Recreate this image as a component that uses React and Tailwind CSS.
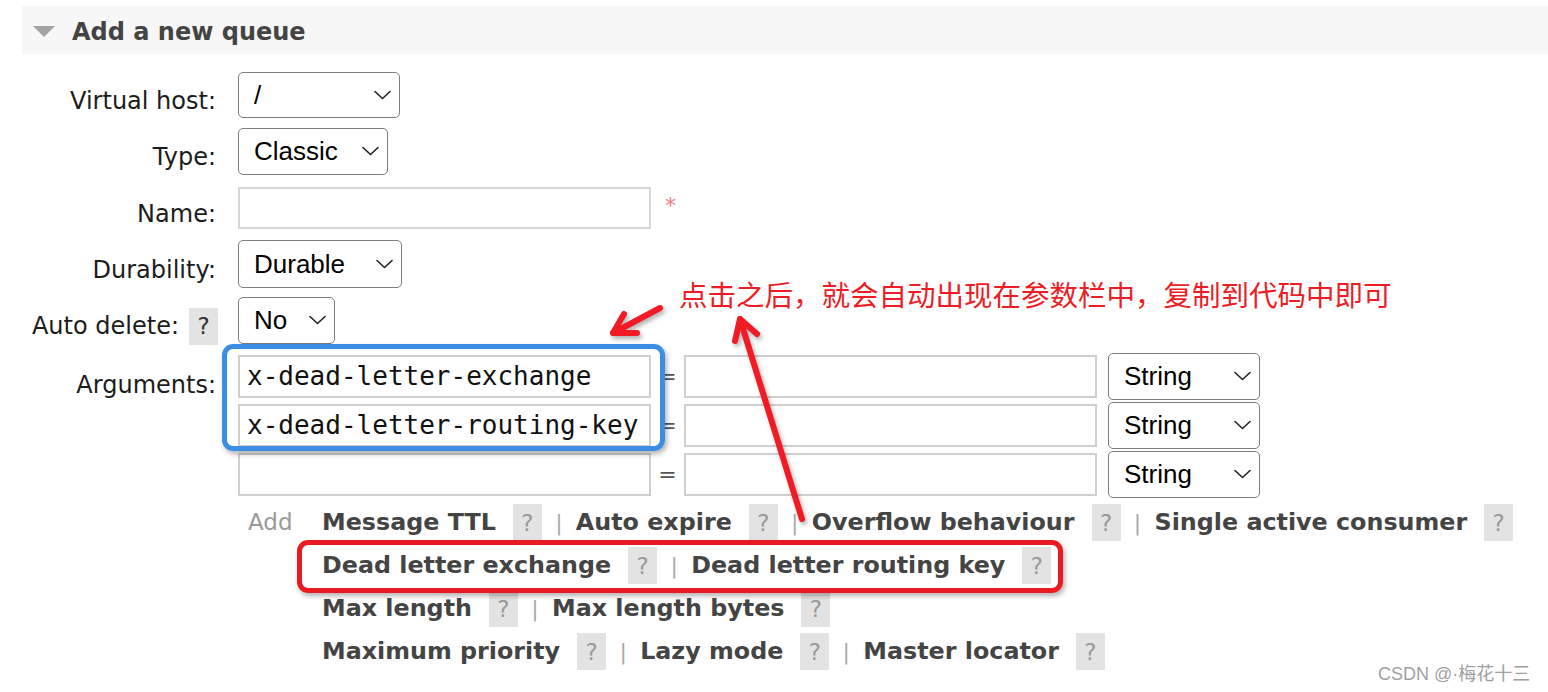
import React from 'react';

const sans = { fontFamily: '"DejaVu Sans", Verdana, sans-serif' };
const arial = { fontFamily: '"Liberation Sans", Arial, sans-serif' };
const mono = { fontFamily: '"DejaVu Sans Mono", Menlo, monospace' };
const cjk = { fontFamily: '"Noto Sans CJK SC", sans-serif' };

function Chevron() {
  return (
    <svg width="17" height="10" viewBox="0 0 17 10" fill="none">
      <path d="M1 1.5l7.5 7 7.5-7" stroke="#222" strokeWidth="1.6" strokeLinecap="round" strokeLinejoin="round" />
    </svg>
  );
}

function Select({ value, width, height = 'h-[47px]' }) {
  return (
    <div
      className={`${width} ${height} flex items-center justify-between pl-[15px] pr-[8px] border-[1.5px] border-[#7d7d7d] rounded-[5px] bg-white text-[26px] text-black`}
      style={arial}
    >
      <span>{value}</span>
      <Chevron />
    </div>
  );
}

function Input({ value = '' }) {
  return (
    <div
      className="w-[413px] h-[43px] flex items-center pl-[7px] border-2 border-[#cfcfcf] bg-white text-[26px] text-[#111]"
      style={mono}
    >
      {value}
    </div>
  );
}

function Help({ dark }) {
  return (
    <span
      className={`inline-flex items-center justify-center w-[29px] h-[37px] bg-[#e3e3e3] text-[23px] ${dark ? 'text-[#333]' : 'text-[#9a9a9a]'}`}
      style={sans}
    >
      ?
    </span>
  );
}

function LinkRow({ items }) {
  return (
    <div className="flex items-center h-[43px]">
      {items.map((label, i) => (
        <React.Fragment key={label}>
          {i > 0 && <span className="w-[34px] text-center text-[22px] text-[#aaa]">|</span>}
          <span className="font-bold text-[23.8px] text-[#444] mr-[17px]">{label}</span>
          <Help />
        </React.Fragment>
      ))}
    </div>
  );
}

function Row({ label, children, help }) {
  return (
    <div className="flex items-center h-[56.3px]">
      <div className="w-[218px] flex justify-end items-center gap-[10px] pt-[12px] text-[24px] text-[#1c1c1c]">
        <span className={help ? '' : 'pr-[2px]'}>{label}</span>
        {help && <Help dark />}
      </div>
      <div className="ml-[20px] flex items-center">{children}</div>
    </div>
  );
}

export default function App() {
  return (
    <div className="relative w-[1548px] h-[692px] bg-white overflow-hidden" style={sans}>
      <div className="mt-[6px] ml-[22px] h-[48px] bg-[#f7f7f7] flex items-center pt-[3px]">
        <svg width="22" height="12" viewBox="0 0 22 12" className="ml-[11px]">
          <path d="M0 0h22L11 11z" fill="#a3a3a3" />
        </svg>
        <span className="ml-[17px] font-bold text-[24px] text-[#444]">Add a new queue</span>
      </div>

      <div className="mt-[13px]">
        <Row label="Virtual host:">
          <Select value="/" width="w-[162px]" height="h-[46px]" />
        </Row>
        <Row label="Type:">
          <Select value="Classic" width="w-[150px]" />
        </Row>
        <Row label="Name:">
          <div className="w-[413px] h-[42px] border-2 border-[#d6d6d6] bg-white" />
          <span className="ml-[14px] -mt-[4px] text-[22px] text-[#ee8080]">*</span>
        </Row>
        <Row label="Durability:">
          <Select value="Durable" width="w-[164px]" height="h-[48px]" />
        </Row>
        <Row label="Auto delete:" help>
          <Select value="No" width="w-[97px]" />
        </Row>

        <div className="flex mt-[4px]">
          <div className="w-[218px] text-right pt-[15px] pr-[2px] text-[24px] text-[#1c1c1c]">Arguments:</div>
          <div className="ml-[20px] flex flex-col gap-[1px]">
            {['x-dead-letter-exchange', 'x-dead-letter-routing-key', ''].map((k) => (
              <div key={k || 'empty'} className="flex items-center h-[48px]">
                <Input value={k} />
                <span className="w-[33px] text-center text-[22px] text-[#555]">=</span>
                <Input />
                <div className="ml-[11px]">
                  <Select value="String" width="w-[152px]" />
                </div>
              </div>
            ))}
          </div>
        </div>

        <div className="flex mt-[3px]">
          <div className="w-[248px]" />
          <div className="w-[74px] pt-[3px] text-[23px] text-[#9a9a9a] leading-[36px]">Add</div>
          <div className="flex flex-col">
            <LinkRow items={['Message TTL', 'Auto expire', 'Overflow behaviour', 'Single active consumer']} />
            <LinkRow items={['Dead letter exchange', 'Dead letter routing key']} />
            <LinkRow items={['Max length', 'Max length bytes']} />
            <LinkRow items={['Maximum priority', 'Lazy mode', 'Master locator']} />
          </div>
        </div>
      </div>

      {/* annotation overlays */}
      <div className="absolute left-[222px] top-[344px] w-[443px] h-[107px] border-[5px] border-[#3b8ee4] rounded-[11px] shadow-[2px_3px_5px_rgba(0,0,0,0.3)]" />
      <div className="absolute left-[297px] top-[540px] w-[766px] h-[53px] border-[5px] border-[#ea1a22] rounded-[11px] shadow-[2px_3px_5px_rgba(0,0,0,0.3)]" />

      <div
        className="absolute left-[679px] top-[276px] text-[28.5px] leading-[36px] text-[#ee1c25] whitespace-nowrap"
        style={cjk}
      >
        点击之后，就会自动出现在参数栏中，复制到代码中即可
      </div>

      <svg className="absolute left-0 top-0" width="1548" height="692" style={{ filter: 'drop-shadow(2px 3px 2px rgba(0,0,0,0.3))' }}>
        <g stroke="#f21a24" strokeWidth="6" strokeLinecap="round" strokeLinejoin="round" fill="none">
          <path d="M660 308L613 333" />
          <path d="M624 314L613 333L637 333" />
          <path d="M802 519L740 319" />
          <path d="M735 341L740 319L757 334" />
        </g>
      </svg>

      <div className="absolute left-[1378px] top-[661px] text-[18px] text-[#a0a0a0]" style={{ fontFamily: '"Liberation Sans", "Noto Sans CJK SC", sans-serif' }}>
        CSDN @·梅花十三
      </div>
    </div>
  );
}
